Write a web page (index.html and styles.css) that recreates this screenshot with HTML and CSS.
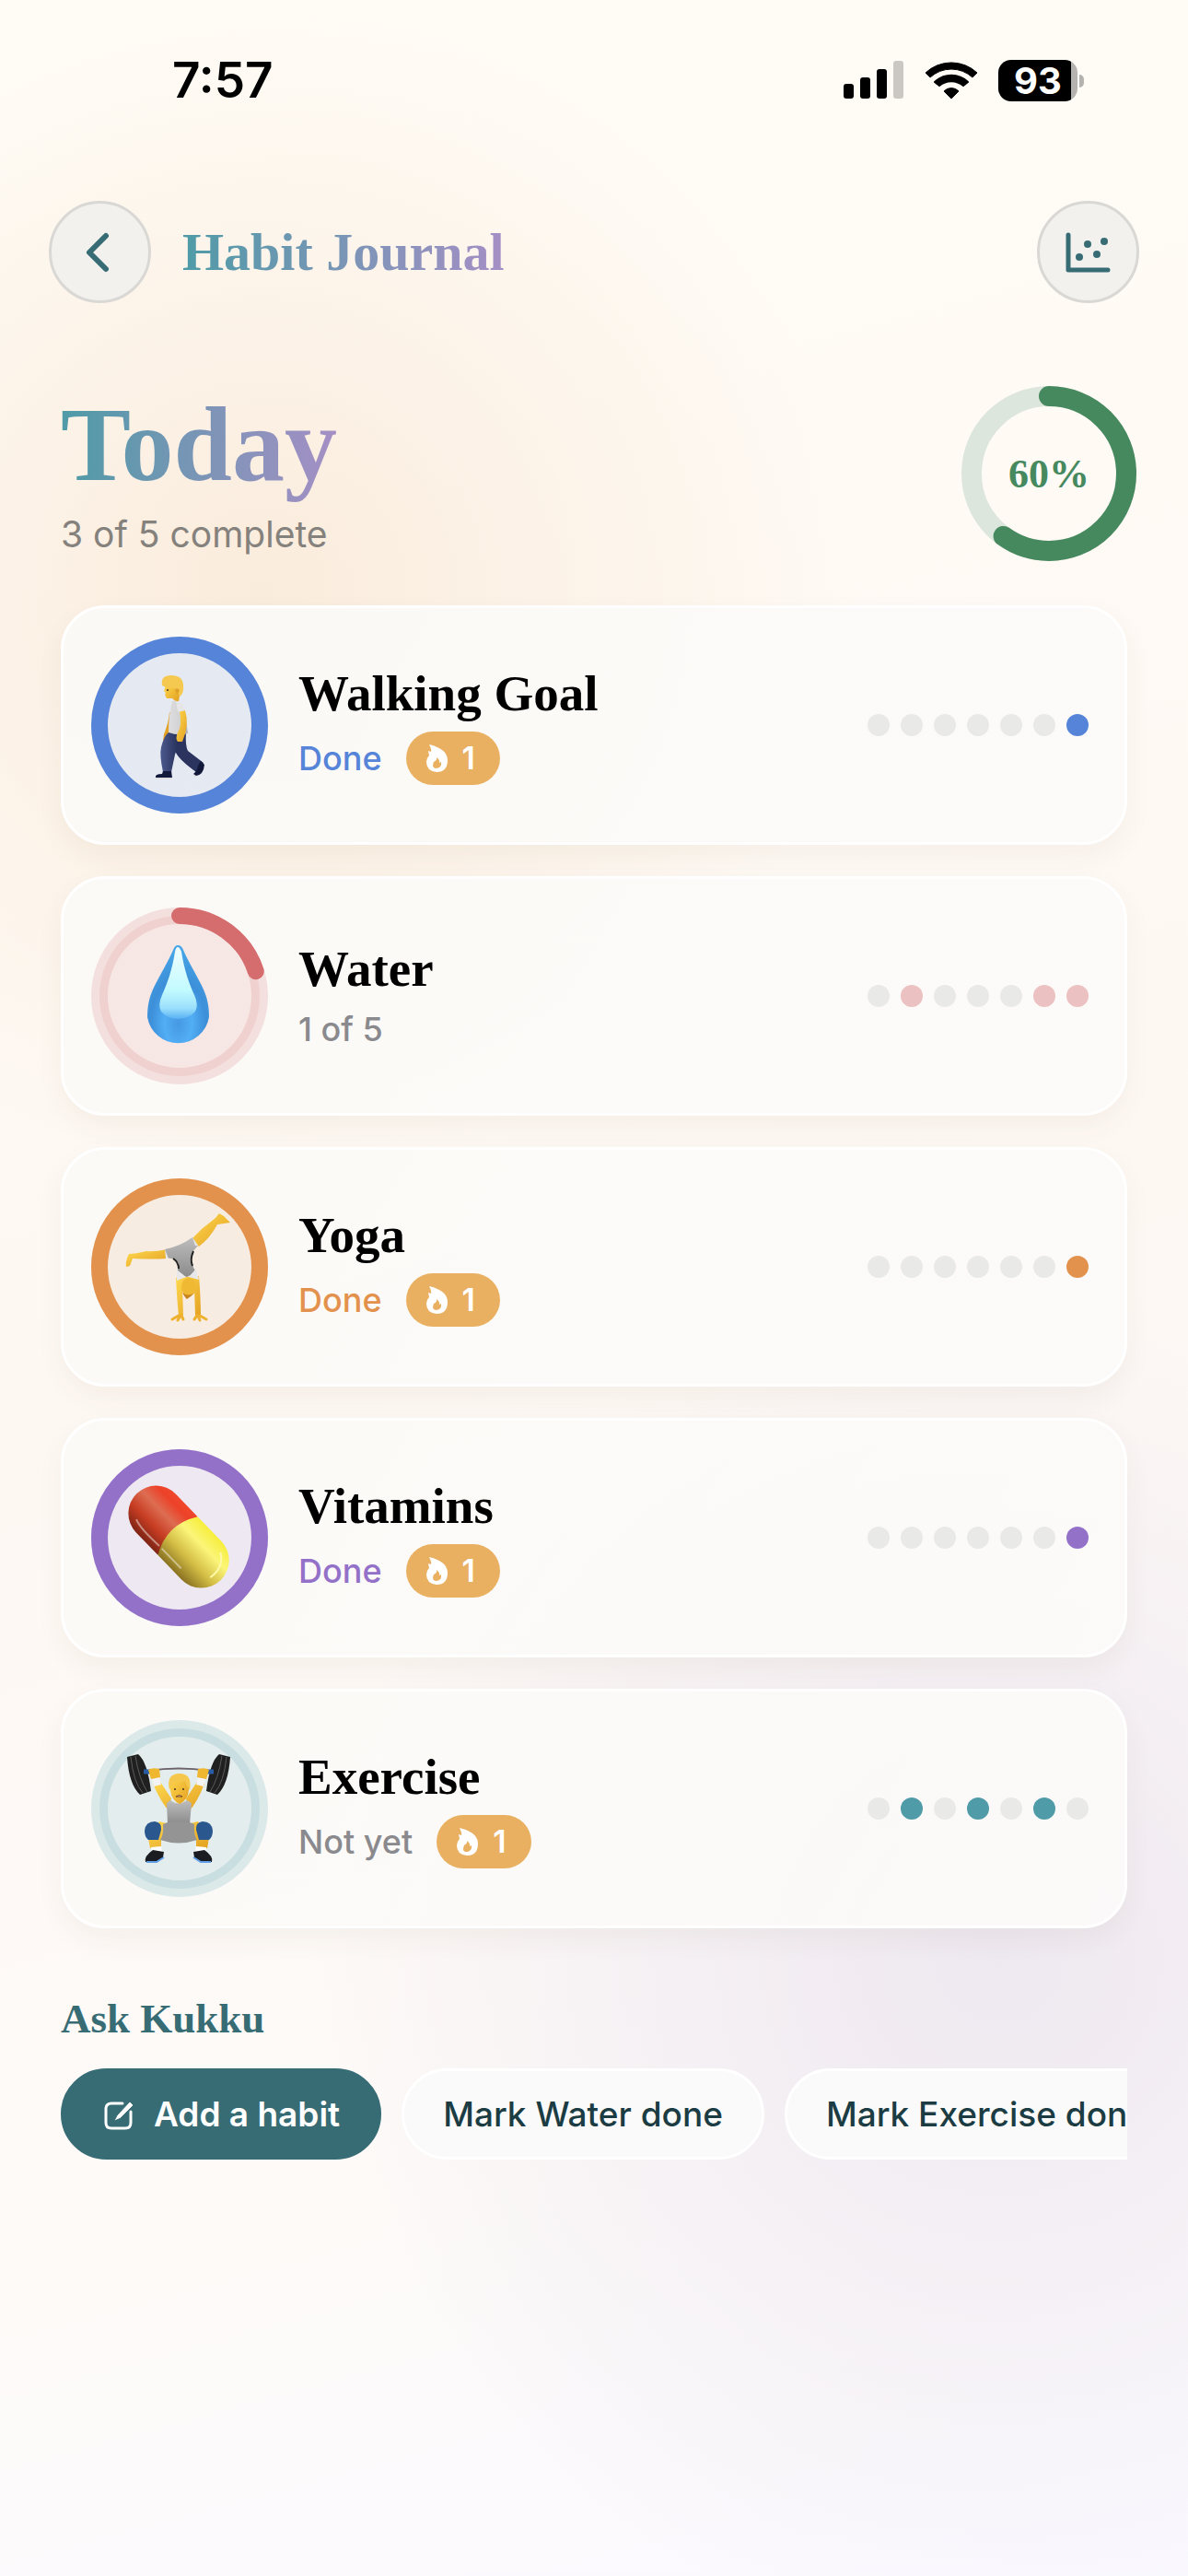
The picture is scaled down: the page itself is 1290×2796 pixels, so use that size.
FILE: index.html
```html
<!DOCTYPE html>
<html lang="en">
<head>
  <meta charset="UTF-8" />
  <meta name="viewport" content="width=device-width, initial-scale=1" />
  <title>Habit Journal</title>
  <link rel="stylesheet" href="styles.css">
</head>
<body>
  <div class="status-bar">
    <div class="time">7:57</div>
    <div class="status-icons">
      <svg width="66" height="42" viewBox="0 0 66 42">
        <rect x="0" y="25" width="11" height="16" rx="3"/>
        <rect x="18" y="18" width="11" height="23" rx="3"/>
        <rect x="36" y="9" width="11" height="32" rx="3"/>
        <rect x="54" y="0" width="11" height="41" rx="3" fill="#cbc8c3"/>
      </svg>
      <svg width="58" height="42" viewBox="0 0 58 42">
        <path d="M6 18A34 34 0 0 1 52 18L57 13A41 41 0 0 0 1 13Z" stroke="#000" stroke-width="1" stroke-linejoin="round"/>
        <path d="M16 27A20 20 0 0 1 42 27L47 23A26 26 0 0 0 11 23Z" stroke="#000" stroke-width="2" stroke-linejoin="round"/>
        <path d="M29 41L21 33A11 11 0 0 1 37 33Z" stroke="#000" stroke-width="1" stroke-linejoin="round"/>
      </svg>
      <div class="battery"><span class="level">93</span></div>
    </div>
  </div>

  <header class="nav">
    <button class="round-btn" aria-label="Back">
      <svg width="105" height="105" viewBox="0 0 105 105"><path d="M59 35L41 53L59 71" class="line" stroke-width="6"/></svg>
    </button>
    <h1>Habit Journal</h1>
    <button class="round-btn" aria-label="Statistics">
      <svg width="105" height="105" viewBox="0 0 105 105">
        <path d="M31 34V72H74" class="line" stroke-width="5"/>
        <circle cx="43" cy="58" r="4"/><circle cx="52" cy="44" r="4"/><circle cx="62" cy="55" r="4"/><circle cx="70" cy="41" r="4"/>
      </svg>
    </button>
  </header>

  <main>
    <section class="today">
      <div>
        <h2>Today</h2>
        <p>3 of 5 complete</p>
      </div>
      <div class="progress">
        <svg width="190" height="190" viewBox="0 0 190 190">
          <circle cx="95" cy="95" r="84" class="track"/>
          <circle cx="95" cy="95" r="84" class="value" pathLength="100" stroke-dasharray="60 100" transform="rotate(-90 95 95)"/>
        </svg>
        <span>60%</span>
      </div>
    </section>

    <div class="habits" id="habits"></div>

    <section class="ask">
      <h3>Ask Kukku</h3>
      <div class="chips">
        <button class="chip primary">
          <svg width="36" height="36" viewBox="0 0 36 36">
            <path d="M22 6H10Q4 6 4 12V27Q4 33 10 33H25Q31 33 31 27V15"/>
            <path d="M13 25L16 19L30 4L34 8L20 22Z" class="pen"/>
          </svg>
          Add a habit
        </button>
        <button class="chip">Mark Water done</button>
        <button class="chip">Mark Exercise done</button>
      </div>
    </section>
  </main>

  <!-- habit pictures -->
  <svg width="0" height="0" class="defs">
    <defs>
      <linearGradient id="skin" x1="0" y1="0" x2="1" y2="1">
        <stop offset="0" stop-color="#ffd94f"/><stop offset="1" stop-color="#e3a021"/>
      </linearGradient>
      <linearGradient id="shirt" x1="0" y1="0" x2="1" y2="0">
        <stop offset="0" stop-color="#dededf"/><stop offset="0.6" stop-color="#d2d2d4"/><stop offset="1" stop-color="#a9a9ad"/>
      </linearGradient>
      <linearGradient id="suit" x1="0" y1="0" x2="0" y2="1">
        <stop offset="0" stop-color="#bdbdbd"/><stop offset="1" stop-color="#8b8b8b"/>
      </linearGradient>
      <linearGradient id="jeans" x1="0" y1="0" x2="1" y2="0">
        <stop offset="0" stop-color="#4c598d"/><stop offset="1" stop-color="#222a52"/>
      </linearGradient>
      <radialGradient id="drop" cx="0.5" cy="0.8" r="0.75">
        <stop offset="0" stop-color="#4699e2"/><stop offset="0.3" stop-color="#52aef5"/><stop offset="0.6" stop-color="#3c8fd8"/><stop offset="1" stop-color="#46a5e6"/>
      </radialGradient>
      <linearGradient id="shine" x1="0" y1="0" x2="0" y2="1">
        <stop offset="0" stop-color="#f2fdff"/><stop offset="0.6" stop-color="#c2fbff"/><stop offset="0.85" stop-color="#9bdffb"/><stop offset="1" stop-color="#58b1f4"/>
      </linearGradient>
      <linearGradient id="pillRed" x1="0" y1="0" x2="0" y2="1">
        <stop offset="0" stop-color="#f0462b"/><stop offset="0.15" stop-color="#ec4229"/><stop offset="0.4" stop-color="#dd6d52"/><stop offset="0.7" stop-color="#c63c22"/><stop offset="1" stop-color="#7e2415"/>
      </linearGradient>
      <linearGradient id="pillYellow" x1="0" y1="0" x2="0" y2="1">
        <stop offset="0" stop-color="#f6ee3c"/><stop offset="0.3" stop-color="#fbf579"/><stop offset="0.65" stop-color="#d3bd45"/><stop offset="1" stop-color="#8a7222"/>
      </linearGradient>
    </defs>

    <symbol id="walk" viewBox="0 0 192 192">
      <path d="M79 106Q84 94 85 82L89 84Q86 102 82 112L78 113Z" fill="#e3a021"/>
      <path d="M91 104L103 104Q102 118 105 124L122 137L114 147Q96 134 92 126Q88 118 91 104Z" fill="#2b345f"/>
      <path d="M84 104L98 104Q95 118 91 128L87 147H78Q74 128 76 120Q79 108 84 104Z" fill="url(#jeans)"/>
      <path d="M119 135L123 139Q122 150 114 151L111 149Q115 146 116 140Z" fill="#11183a"/>
      <path d="M78 146L87 146L88 153H70Q69 149 77 149Z" fill="#11183a"/>
      <path d="M70 154H88M111 150L114 152" stroke="#d9d4d2" stroke-width="1"/>
      <path d="M88 70Q96 67 101 79L105 105Q95 108 84 104Q84 84 88 70Z" fill="url(#shirt)"/>
      <path d="M96 81L102 80Q107 96 99 114L94 114Q91 111 94 104Q99 97 96 81Z" fill="url(#skin)"/>
      <path d="M80 50H95L96 64L95 70Q91 71 88 67L82 67L80 63L81 61L79 59L80 56Z" fill="url(#skin)"/>
      <path d="M77 53Q75 42 87 42Q99 42 100 52Q101 62 96 65L94 60Q93 57 89 56Q83 57 77 53Z" fill="#f5c850"/>
      <path d="M91 57Q95 55 96 59L93 63Z" fill="#e0a12a"/>
      <circle cx="83" cy="58" r="1" fill="#43301b"/>
      <path d="M92 70Q100 70 102 80L94 82Z" fill="#e6e6e9"/>
    </symbol>

    <symbol id="water" viewBox="0 0 192 192">
      <path d="M94 41Q98 41 100 46C105 58 115 74 122 89C126 98 128 107 128 119A34 34 0 0 1 61 119C61 107 63 98 67 89C74 74 84 58 89 46Q91 41 94 41Z" fill="url(#drop)"/>
      <path d="M94 43Q96 43 98 48C101 68 107 84 112 95Q117 106 113 113Q107 120 94 121Q82 120 76 113Q72 106 77 95C82 84 88 68 91 48Q92 43 94 43Z" fill="url(#shine)"/>
    </symbol>

    <symbol id="yoga" viewBox="0 0 192 192">
      <path d="M82 77Q68 80 60 79Q48 82 41 82Q37 90 38 96L42 95L45 87Q66 88 82 87Z" fill="url(#skin)"/>
      <path d="M109 66L117 74Q129 65 137 50L151 48L144 41L139 38L135 43L120 55Z" fill="url(#skin)"/>
      <path d="M92 108Q93 130 95 150L100 149L99 118L112 118L113 149L119 150Q119 130 117 106Z" fill="url(#skin)"/>
      <path d="M95 149L88 153M97 149L94 154M98 149L100 153M115 149L112 153M116 149L118 154M118 149L125 153" stroke="#eeb12f" stroke-width="3" stroke-linecap="round"/>
      <path d="M99 118L101 128L100 138H112V118Z" fill="#f8ede4"/>
      <ellipse cx="106" cy="118" rx="8" ry="10" fill="#efb934"/>
      <path d="M99 124Q103 131 104 131Q108 129 112 124Q106 129 99 124Z" fill="#c9841f"/>
      <path d="M80 77Q96 74 110 64L116 73L109 81Q107 91 114 102L104 107L93 105L95 92Q92 86 82 87Z" fill="url(#suit)"/>
      <path d="M80 77L84 87L81 87ZM110 64L113 73L116 73ZM93 99L103 107L93 111ZM106 107L114 98L117 110Z" fill="#e8e8eb"/>
      <path d="M89 87Q95 91 95 98M111 79Q107 88 110 95" fill="none" stroke="#222" stroke-width="2"/>
    </symbol>

    <symbol id="vitamins" viewBox="0 0 192 192">
      <g transform="rotate(46 94 94)">
        <path d="M94 64H60A30 30 0 0 0 60 124H94Z" fill="url(#pillRed)"/>
        <path d="M94 64H131A30 30 0 0 1 131 124H94Q76 94 94 64Z" fill="url(#pillYellow)"/>
        <path d="M50 114Q60 118 88 116M92 116H122" fill="none" stroke="#fff" stroke-opacity="0.45" stroke-width="2"/>
        <path d="M139 73Q154 82 151 100" fill="none" stroke="#fff9a8" stroke-width="2"/>
      </g>
    </symbol>

    <symbol id="exercise" viewBox="0 0 192 192">
      <path d="M62 55Q95 50 128 55" fill="none" stroke="#6c6269" stroke-width="2"/>
      <path d="M39 40L51 37Q61 45 65 77L53 81Q41 70 39 40ZM151 40L139 37Q129 45 125 77L137 81Q149 70 151 40Z" fill="#202021"/>
      <path d="M43 40Q46 68 56 79M48 39Q52 64 61 78M147 40Q144 68 134 79M142 39Q138 64 129 78" fill="none" stroke="#5a5a5a" stroke-width="1"/>
      <path d="M57 56H64M126 56H133" stroke="#285da6" stroke-width="5"/>
      <path d="M67 69L75 67L87 85L85 99Q76 90 67 69ZM123 69L115 67L103 85L106 99Q115 90 123 69Z" fill="url(#skin)"/>
      <path d="M66 63L74 62L76 70L68 72ZM124 63L116 62L114 70L122 72Z" fill="#f3f3f6"/>
      <path d="M62 54Q66 51 74 53L75 62L65 64ZM128 54Q124 51 116 53L115 62L125 64Z" fill="#efb62f"/>
      <path d="M74 110L86 113L84 131L76 130V139H64L62 128ZM116 110L104 113L106 131L114 130V139H126L128 128Z" fill="url(#skin)"/>
      <path d="M58 120Q59 110 69 110Q77 111 76 119L73 130H62Q58 127 58 120ZM132 120Q131 110 121 110Q113 111 114 119L117 130H128Q132 127 132 120Z" fill="#2b578f"/>
      <path d="M82 90L86 87Q95 94 104 87L109 90L107 113H83Z" fill="url(#suit)"/>
      <path d="M83 111H107L112 113Q111 124 115 130Q95 137 75 130Q79 124 78 113Z" fill="#949494"/>
      <path d="M65 138L76 137L77 143H66ZM125 138L114 137L113 143H124Z" fill="#fff"/>
      <path d="M67 141L79 143L78 149L70 154H59Q57 148 67 141ZM123 141L111 143L112 149L120 154H131Q133 148 123 141Z" fill="#1b1c22"/>
      <path d="M60 154H71L79 149M130 154H119L111 149" fill="none" stroke="#609ee8" stroke-width="2"/>
      <path d="M86 76Q84 60 96 60Q108 60 106 76Q105 87 96 91Q87 87 86 76Z" fill="url(#skin)"/>
      <path d="M85 76Q81 58 96 58Q110 58 107 76Q104 72 102 66Q94 69 91 66Q87 70 85 76Z" fill="#f5c84d"/>
      <circle cx="91" cy="75" r="1" fill="#43301b"/><circle cx="100" cy="75" r="1" fill="#43301b"/>
      <path d="M92 83Q96 80 99 83H92Z" fill="#fff" stroke="#754219" stroke-width="1"/>
    </symbol>

    <symbol id="flame" viewBox="0 0 24 30">
      <path fill-rule="evenodd" d="M4 0Q24 5 24 17Q24 30 12 30Q1 29 1 19Q1 15 4 12L3 7L6 8Q7 6 4 0ZM12 14Q13 17 9 19Q6 26 12 26Q18 25 17 19L15 20Q16 17 12 14Z"/>
    </symbol>
  </svg>

  <script>
    const habits = [
      { name: 'Walking Goal', icon: 'walk', color: '#5684d8', status: 'Done', progress: 100, streak: 1, days: [0, 0, 0, 0, 0, 0, 1] },
      { name: 'Water', icon: 'water', color: '#d56c6e', status: '1 of 5', progress: 20, days: [0, 0.4, 0, 0, 0, 0.4, 0.4] },
      { name: 'Yoga', icon: 'yoga', color: '#e3924d', status: 'Done', progress: 100, streak: 1, days: [0, 0, 0, 0, 0, 0, 1] },
      { name: 'Vitamins', icon: 'vitamins', color: '#9471c9', status: 'Done', progress: 100, streak: 1, days: [0, 0, 0, 0, 0, 0, 1] },
      { name: 'Exercise', icon: 'exercise', color: '#4f9ba7', status: 'Not yet', progress: 0, streak: 1, days: [0, 1, 0, 1, 0, 1, 0] }
    ];

    function renderHabit(h) {
      const dots = h.days.map(d => d ? `<i class="filled" style="opacity:${d}"></i>` : '<i></i>').join('');
      const arc = h.progress ? `<circle cx="96" cy="96" r="87" class="arc" pathLength="100" stroke-dasharray="${h.progress} 100" transform="rotate(-90 96 96)"/>` : '';
      const streak = h.streak ? `<span class="streak"><svg width="24" height="30"><use href="#flame"/></svg>${h.streak}</span>` : '';
      return `
        <article class="card" style="--color:${h.color}">
          <svg class="ring" width="192" height="192" viewBox="0 0 192 192">
            <circle cx="96" cy="96" r="87" class="base"/>
            <circle cx="96" cy="96" r="87" class="fill"/>
            ${arc}
            <use href="#${h.icon}"/>
          </svg>
          <div class="info">
            <h3>${h.name}</h3>
            <div class="meta">
              <span class="${h.progress === 100 ? 'done' : 'pending'}">${h.status}</span>
              ${streak}
            </div>
          </div>
          <div class="dots">${dots}</div>
        </article>`;
    }

    document.getElementById('habits').innerHTML = habits.map(renderHabit).join('');
  </script>
</body>
</html>
```
FILE: styles.css
```css
* {
  box-sizing: border-box;
}
body {
  margin: 0;
  min-height: 100vh;
  font-family: Inter, "Liberation Sans", sans-serif;
  color: #000;
  background:
    radial-gradient(circle at 22% 23%, #faecdc 0, rgba(250, 236, 220, 0) 640px),
    radial-gradient(circle at 84% 76%, #eee8f0 0, rgba(238, 232, 240, 0) 740px),
    linear-gradient(165deg, #fffcf6, #fef8f3 50%, #fdfaf8 80%, #faf9ff);
}
h1, h2, h3, p {
  margin: 0;
}
h1, h2, h3, .progress {
  font-family: "Liberation Serif", serif;
  font-weight: bold;
}
button {
  font-family: inherit;
  cursor: pointer;
}

.status-bar {
  display: flex;
  justify-content: space-between;
  align-items: center;
  height: 174px;
  padding: 0 112px 0 187px;
}
.time {
  font-size: 53px;
  font-weight: 600;
}
.status-icons {
  display: flex;
  align-items: center;
  gap: 22px;
}
.battery {
  position: relative;
  width: 86px;
  height: 45px;
  margin-right: 8px;
  border-radius: 14px;
  background: linear-gradient(90deg, #000 79px, #b5b3af 79px);
}
.battery::after {
  content: "";
  position: absolute;
  left: 88px;
  top: 16px;
  width: 5px;
  height: 14px;
  border-radius: 0 7px 7px 0;
  background: #b5b3af;
}
.level {
  display: block;
  color: #fff;
  font-size: 40px;
  font-weight: 700;
  line-height: 45px;
  text-align: center;
}

.nav {
  display: flex;
  align-items: center;
  gap: 34px;
  padding: 44px 53px 0;
}
.round-btn {
  width: 111px;
  height: 111px;
  padding: 0;
  display: grid;
  place-items: center;
  border: 3px solid #dad8d5;
  border-radius: 50%;
  background: #f3f1ee;
  fill: #376c75;
}
.round-btn:last-child {
  margin-left: auto;
}
.line {
  fill: none;
  stroke: #376c75;
  stroke-linecap: round;
  stroke-linejoin: round;
}
h1, h2 {
  background: linear-gradient(90deg, #4f9ba7, #a58fc5);
  background-clip: text;
  -webkit-background-clip: text;
  color: transparent;
}
h1 {
  font-size: 58px;
  line-height: 80px;
}

main {
  padding: 88px 66px 0;
}
.today {
  display: flex;
  justify-content: space-between;
  align-items: center;
  margin-right: -10px;
}
.today h2 {
  width: max-content;
  font-size: 114px;
  line-height: 132px;
}
.today p {
  color: #85817d;
  font-size: 39px;
  line-height: 62px;
}
.progress {
  display: grid;
  place-items: center;
  color: #47895f;
  font-size: 44px;
}
.progress > * {
  grid-area: 1 / 1;
}
.progress circle {
  fill: none;
  stroke-width: 22px;
}
.progress .track {
  stroke: #dde6dc;
}
.progress .value {
  stroke: #47895f;
  stroke-linecap: round;
}

.habits {
  display: grid;
  gap: 34px;
  margin-top: 46px;
}
.card {
  display: flex;
  align-items: center;
  gap: 33px;
  height: 260px;
  padding: 0 39px 0 30px;
  border: 3px solid #fff;
  border-radius: 48px;
  background: linear-gradient(120deg, rgba(251, 250, 247, 0.94), rgba(252, 251, 250, 0.9));
  box-shadow: 0 12px 30px rgba(80, 50, 20, 0.05);
}
.ring {
  flex: none;
}
.base, .arc {
  fill: none;
  stroke: var(--color);
  stroke-width: 18px;
}
.base {
  opacity: 0.18;
}
.fill {
  fill: var(--color);
  opacity: 0.13;
}
.arc {
  stroke-linecap: round;
}
.info {
  flex: 1;
}
.card h3 {
  font-size: 55px;
  line-height: 62px;
}
.meta {
  display: flex;
  align-items: center;
  gap: 26px;
  margin-top: 10px;
  font-size: 36px;
  font-weight: 500;
  line-height: 48px;
}
.done {
  color: var(--color);
}
.pending {
  color: #8a8a8e;
}
.streak {
  display: flex;
  align-items: center;
  gap: 16px;
  height: 58px;
  padding: 0 27px 0 21px;
  border-radius: 29px;
  background: #e9b062;
  color: #fff;
  font-size: 34px;
  font-weight: 600;
}
.streak svg {
  fill: #fff;
}
.dots {
  display: flex;
  gap: 12px;
}
.dots i {
  width: 24px;
  height: 24px;
  border-radius: 50%;
  background: #e9e9e8;
}
.dots .filled {
  background: var(--color);
}

.ask {
  margin-top: 68px;
}
.ask h3 {
  color: #376c75;
  font-size: 45px;
  line-height: 60px;
}
.chips {
  display: flex;
  gap: 22px;
  margin-top: 24px;
  overflow: hidden;
}
.chip {
  flex: none;
  display: flex;
  align-items: center;
  gap: 20px;
  height: 99px;
  padding: 0 42px;
  border: 3px solid #fff;
  border-radius: 50px;
  background: #fafafa;
  color: #1b3c43;
  font-size: 37px;
  font-weight: 500;
  white-space: nowrap;
}
.chip.primary {
  border-color: #376c75;
  background: #376c75;
  color: #fff;
  font-weight: 600;
}
.chip svg {
  fill: none;
  stroke: #fff;
  stroke-width: 3px;
  stroke-linecap: round;
}
.chip .pen {
  fill: #fff;
  stroke: #376c75;
  stroke-width: 1px;
}
.defs {
  position: absolute;
}
```
